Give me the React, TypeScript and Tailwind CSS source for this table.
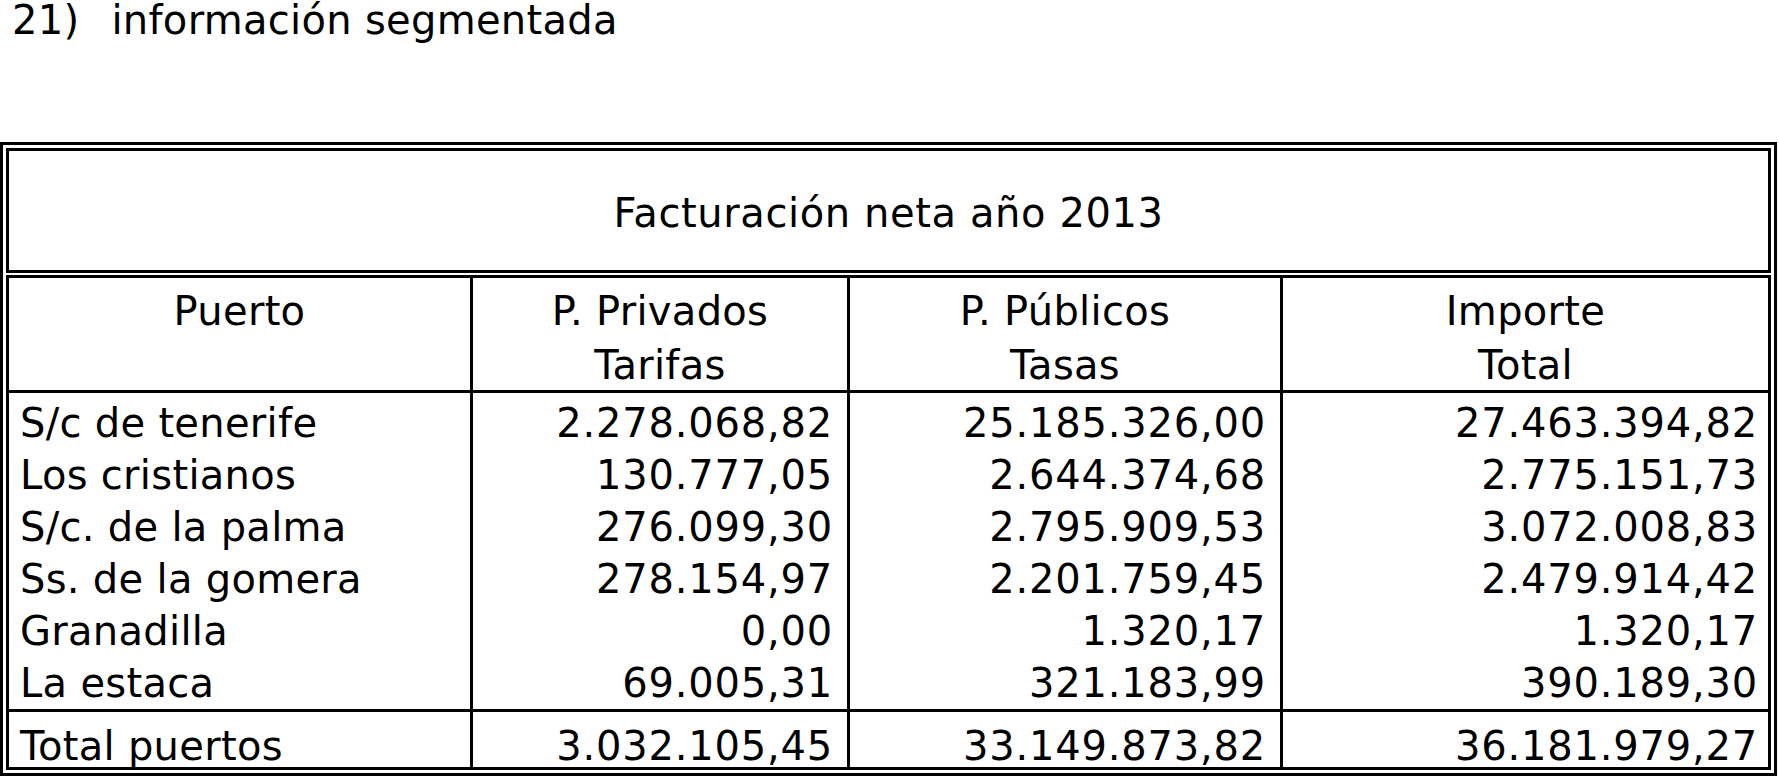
const ROWS = [
  ["S/c de tenerife", "2.278.068,82", "25.185.326,00", "27.463.394,82"],
  ["Los cristianos", "130.777,05", "2.644.374,68", "2.775.151,73"],
  ["S/c. de la palma", "276.099,30", "2.795.909,53", "3.072.008,83"],
  ["Ss. de la gomera", "278.154,97", "2.201.759,45", "2.479.914,42"],
  ["Granadilla", "0,00", "1.320,17", "1.320,17"],
  ["La estaca", "69.005,31", "321.183,99", "390.189,30"],
];

const TOTAL = ["Total puertos", "3.032.105,45", "33.149.873,82", "36.181.979,27"];

const GRID = "grid grid-cols-[461px_377px_433px_1fr]";

// numeric columns: last one sits a bit closer to the frame
const NUM_PAD = ["", "pr-[14px]", "pr-[14px]", "pr-[10px]"];

export default function App() {
  return (
    <div className="min-h-screen bg-white text-black font-['DejaVu_Sans',Verdana,sans-serif] text-[40px] tracking-[0.3px]">
      <p className="pl-3 leading-[40px] whitespace-nowrap">
        <span>21)</span>
        <span className="ml-[32px]">información segmentada</span>
      </p>

      <div className="mt-[102px] w-[1777px] border-[3px] border-black p-[3px]">
        <div className="h-[125px] border-[3px] border-black pt-[42px] text-center leading-[40px] tracking-[0.6px]">
          Facturación neta año 2013
        </div>

        <div className="mt-[2px] border-[3px] border-black">
          {/* cabecera */}
          <div className={`${GRID} h-[115px] border-b-[3px] border-black text-center leading-[54px]`}>
            <div className="pt-[6px]">Puerto</div>
            <div className="border-l-[3px] border-black pt-[6px]">
              P. Privados
              <br />
              Tarifas
            </div>
            <div className="border-l-[3px] border-black pt-[6px]">
              P. Públicos
              <br />
              Tasas
            </div>
            <div className="border-l-[3px] border-black pt-[6px]">
              Importe
              <br />
              Total
            </div>
          </div>

          {/* puertos */}
          <div className={`${GRID} h-[319px] border-b-[3px] border-black leading-[52px] whitespace-nowrap`}>
            <div className="pt-1 pl-[11px]">
              {ROWS.map((r) => (
                <div key={r[0]}>{r[0]}</div>
              ))}
            </div>
            {[1, 2, 3].map((c) => (
              <div key={c} className={`border-l-[3px] border-black pt-1 ${NUM_PAD[c]} text-right tracking-[0.8px]`}>
                {ROWS.map((r) => (
                  <div key={r[0]}>{r[c]}</div>
                ))}
              </div>
            ))}
          </div>

          {/* total */}
          <div className={`${GRID} h-[55px] leading-[40px] whitespace-nowrap`}>
            <div className="pt-[14px] pl-[11px]">{TOTAL[0]}</div>
            {[1, 2, 3].map((c) => (
              <div key={c} className={`border-l-[3px] border-black pt-[14px] ${NUM_PAD[c]} text-right tracking-[0.8px]`}>
                {TOTAL[c]}
              </div>
            ))}
          </div>
        </div>
      </div>
    </div>
  );
}
